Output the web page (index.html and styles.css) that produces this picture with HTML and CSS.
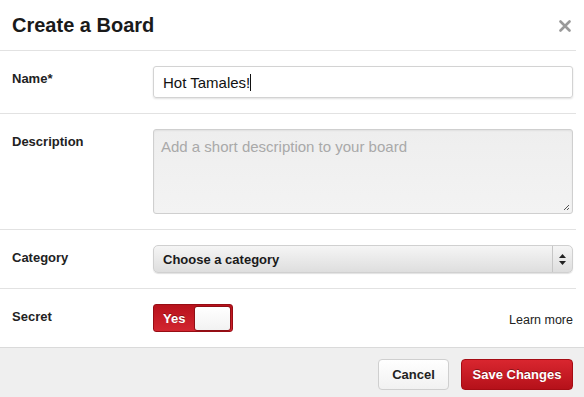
FILE: index.html
```html
<!DOCTYPE html>
<html lang="en">
<head>
    <meta charset="UTF-8">
    <title>Create a Board</title>
    <link rel="stylesheet" href="styles.css">
</head>
<body>
    <div class="modal">
        <header class="modal-header">
            <h1>Create a Board</h1>
            <button class="close" aria-label="Close">
                <svg width="12" height="12" viewBox="0 0 12 12"><path d="M1.5 1.5 L10.5 10.5 M10.5 1.5 L1.5 10.5" stroke="#9a9a9a" stroke-width="2.6" stroke-linecap="round"/></svg>
            </button>
        </header>

        <div class="row">
            <label class="label">Name*</label>
            <div class="field">
                <div class="input">Hot Tamales!<span class="caret"></span></div>
            </div>
        </div>

        <div class="row">
            <label class="label">Description</label>
            <div class="field">
                <div class="textarea">
                    <span class="placeholder">Add a short description to your board</span>
                    <svg class="grip" width="7" height="7" viewBox="0 0 7 7"><path d="M1 6 L6 1 M4 6 L6 4" stroke="#555" stroke-width="1"/></svg>
                </div>
            </div>
        </div>

        <div class="row">
            <label class="label">Category</label>
            <div class="field">
                <div class="select">
                    <span class="select-text">Choose a category</span>
                    <span class="select-arrows">
                        <svg width="7" height="11" viewBox="0 0 7 11"><path d="M3.5 0 L7 4 L0 4 Z M0 7 L7 7 L3.5 11 Z" fill="#222"/></svg>
                    </span>
                </div>
            </div>
        </div>

        <div class="row last">
            <label class="label">Secret</label>
            <div class="field secret">
                <div class="toggle">
                    <span class="toggle-text">Yes</span>
                    <span class="knob"></span>
                </div>
                <a class="learn" href="#">Learn more</a>
            </div>
        </div>

        <footer class="modal-footer">
            <button class="btn cancel">Cancel</button>
            <button class="btn save">Save Changes</button>
        </footer>
    </div>
</body>
</html>
```

FILE: styles.css
```css
/* Reset */
body, h1, button {
    margin: 0;
    padding: 0;
}

body {
    font-family: 'Liberation Sans', Arial, sans-serif;
    background: #fff;
    color: #222;
}

.modal {
    width: 584px;
    height: 397px;
    overflow: hidden;
    display: flex;
    flex-direction: column;
}

/* Header */
.modal-header {
    display: flex;
    justify-content: space-between;
    align-items: center;
    height: 50px;
    margin-right: 8px;
    padding: 0 5px 0 12px;
    border-bottom: 1px solid #e2e2e2;
}

.modal-header h1 {
    font-size: 20px;
    font-weight: bold;
    color: #1a1a1a;
    padding-top: 1px;
}

.close {
    background: none;
    border: none;
    width: 12px;
    height: 12px;
    margin-top: 2px;
    display: flex;
}

/* Form rows */
.row {
    display: flex;
    margin-right: 8px;
    padding: 15px 3px 15px 12px;
    border-bottom: 1px solid #e2e2e2;
}

.row.last {
    border-bottom: none;
}

.label {
    width: 141px;
    flex-shrink: 0;
    padding-top: 5px;
    font-size: 13px;
    line-height: 15px;
    font-weight: bold;
    color: #222;
}

.field {
    flex: 1;
}

.input {
    height: 30px;
    border: 1px solid #d3d3d3;
    border-radius: 3px;
    box-shadow: 0 1px 2px rgba(0, 0, 0, 0.12);
    padding-left: 9px;
    font-size: 15px;
    line-height: 31px;
    color: #111;
}

.caret {
    display: inline-block;
    width: 1px;
    height: 17px;
    background: #111;
    vertical-align: -3px;
}

.textarea {
    position: relative;
    height: 83px;
    border: 1px solid #cfcfcf;
    border-radius: 3px;
    background: linear-gradient(to bottom, #eeeeee, #f3f3f3);
    box-shadow: inset 0 1px 2px rgba(0, 0, 0, 0.06);
    padding-left: 7px;
}

.placeholder {
    display: block;
    padding-top: 8px;
    font-size: 15px;
    line-height: 18px;
    color: #a9a9a9;
}

.grip {
    position: absolute;
    right: 2px;
    bottom: 2px;
}

.select {
    display: flex;
    height: 26px;
    border: 1px solid #d0d0d0;
    border-radius: 5px;
    background: linear-gradient(to bottom, #f5f5f5, #dedede);
    box-shadow: 0 1px 1px rgba(0, 0, 0, 0.12);
}

.select-text {
    flex: 1;
    padding-left: 9px;
    font-size: 13px;
    font-weight: bold;
    line-height: 27px;
    color: #1a1a1a;
}

.select-arrows {
    width: 19px;
    border-left: 1px solid #c6c6c6;
    display: flex;
    align-items: center;
    justify-content: center;
}

/* Secret toggle */
.secret {
    display: flex;
    justify-content: space-between;
    align-items: center;
}

.toggle {
    display: flex;
    align-items: center;
    justify-content: space-between;
    width: 76px;
    height: 24px;
    padding: 1px;
    border: 1px solid #980d14;
    border-radius: 3px;
    background: linear-gradient(to bottom, #b8121c, #d22630);
}

.toggle-text {
    padding-left: 8px;
    font-size: 13px;
    font-weight: bold;
    color: #fff;
    text-shadow: 0 -1px 0 rgba(0, 0, 0, 0.3);
}

.knob {
    width: 35px;
    height: 23px;
    border: 1px solid #8e0f15;
    border-radius: 3px;
    background: linear-gradient(to bottom, #ffffff, #f2f2f2);
}

.learn {
    font-size: 12.5px;
    color: #222;
    text-decoration: none;
    margin-top: 3px;
}

/* Footer */
.modal-footer {
    flex: 1;
    display: flex;
    justify-content: flex-end;
    align-items: flex-start;
    gap: 12px;
    padding: 11px 11px 0 0;
    background: #efefef;
    border-top: 1px solid #dadada;
}

.btn {
    height: 31px;
    font-family: 'Liberation Sans', Arial, sans-serif;
    font-size: 13px;
    font-weight: bold;
    border-radius: 4px;
}

.cancel {
    width: 71px;
    border: 1px solid #cfcfcf;
    background: linear-gradient(to bottom, #ffffff, #f1f1f1);
    color: #222;
}

.save {
    width: 112px;
    border: 1px solid #a50c14;
    background: linear-gradient(to bottom, #d9262f, #b5111a);
    color: #fff;
    text-shadow: 0 -1px 0 rgba(0, 0, 0, 0.35);
}
```
